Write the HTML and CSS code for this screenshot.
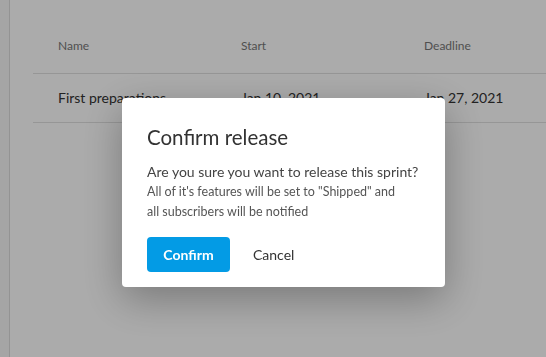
FILE: index.html
```html
<!DOCTYPE html>
<html lang="en">
<head>
    <meta charset="UTF-8">
    <meta name="viewport" content="width=device-width, initial-scale=1.0">
    <title>Sprints</title>
    <link rel="stylesheet" href="styles.css">
</head>
<body>
    <div class="layout">
        <aside class="sidebar"></aside>
        <main class="content">
            <table class="sprints">
                <thead>
                    <tr>
                        <th>Name</th>
                        <th>Start</th>
                        <th>Deadline</th>
                    </tr>
                </thead>
                <tbody>
                    <tr>
                        <td>First preparations</td>
                        <td>Jan 10, 2021</td>
                        <td>Jan 27, 2021</td>
                    </tr>
                </tbody>
            </table>
        </main>
    </div>

    <div class="overlay">
        <div class="dialog">
            <h2>Confirm release</h2>
            <p class="question">Are you sure you want to release this sprint?</p>
            <p class="note">All of it's features will be set to "Shipped" and<br>all subscribers will be notified</p>
            <div class="actions">
                <button class="btn-confirm">Confirm</button>
                <button class="btn-cancel">Cancel</button>
            </div>
        </div>
    </div>
</body>
</html>
```

FILE: styles.css
```css
body {
    margin: 0;
    font-family: Lato, "Noto Sans", sans-serif;
    background-color: #ffffff;
    height: 100vh;
    overflow: hidden;
}
.layout {
    display: flex;
    height: 100%;
}
.sidebar {
    flex-shrink: 0;
    width: 9px;
    background-color: #f7f7f7;
    border-right: 1px solid #dcdcdc;
}
.content {
    flex: 1;
    min-width: 0;
    padding-left: 23px;
}
.sprints {
    width: 100%;
    border-collapse: collapse;
    table-layout: fixed;
}
.sprints th {
    text-align: left;
    font-weight: normal;
    font-size: 12px;
    color: #777;
    padding: 38px 0 0 25px;
    height: 35px;
    vertical-align: top;
    border-bottom: 1px solid #e0e0e0;
}
.sprints th:nth-child(1),
.sprints th:nth-child(2) {
    width: 158px;
}
.sprints td {
    font-size: 14px;
    color: #333;
    padding: 0 0 2px 25px;
    height: 46px;
    border-bottom: 1px solid #e0e0e0;
}
.overlay {
    position: fixed;
    inset: 0;
    background-color: rgba(0, 0, 0, 0.33);
    display: flex;
    align-items: flex-start;
    padding: 98px 0 0 122px;
}
.dialog {
    background-color: white;
    width: 273px;
    padding: 27px 25px 15px;
    border-radius: 4px;
    box-shadow: 0 12px 40px rgba(0, 0, 0, 0.3);
}
.dialog h2 {
    margin: 0;
    font-size: 20.5px;
    font-weight: normal;
    color: #333;
}
.question {
    margin: 14px 0 0;
    font-size: 14px;
    white-space: nowrap;
    color: #444;
}
.note {
    margin: 2px 0 0;
    font-size: 12.5px;
    line-height: 20px;
    color: #555;
}
.actions {
    display: flex;
    align-items: center;
    gap: 7px;
    margin-top: 15px;
}
.actions button {
    font-family: inherit;
    font-size: 14px;
    border: none;
    border-radius: 4px;
    height: 35px;
    cursor: pointer;
}
.btn-confirm {
    background-color: #039be5;
    color: white;
    font-weight: bold;
    width: 83px;
}
.btn-cancel {
    background: none;
    color: #333;
    padding: 0 16px;
}
```
